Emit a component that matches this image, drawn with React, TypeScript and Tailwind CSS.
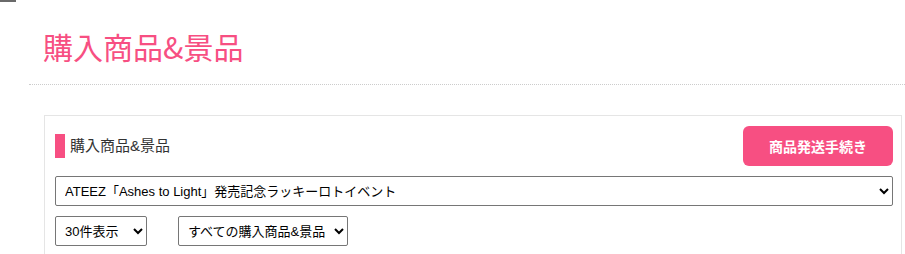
import React from "react";

const PINK = "bg-[#f74f82]";

export default function App() {
  return (
    <div className="w-[905px] h-[254px] overflow-hidden bg-white font-['Liberation_Sans','Noto_Sans_CJK_JP',sans-serif] text-black">
      {/* clipped text remnant at the very top */}
      <div className="h-[2px] w-[16px] bg-[#6a6a6a]" />

      {/* Page title */}
      <div className="ml-[29px]">
        <h1 className="mt-[22px] pl-[14px] pb-[16px] text-[30px] leading-[44px] font-normal text-[#f74f82] font-['Noto_Sans_CJK_JP',sans-serif] border-b border-dotted border-[#cccccc]">
          購入商品&amp;景品
        </h1>
      </div>

      {/* Card */}
      <div className="ml-[44px] mt-[30px] w-[858px] border border-[#e5e5e5] pt-[10px] pl-[10px] pr-[8px] pb-[10px]">
        <div className="flex h-[40px] items-center justify-between">
          <div className="flex items-center">
            <span className={`block h-[24px] w-[10px] ${PINK}`} />
            <span className="ml-[5px] text-[15px] leading-[24px] text-[#333333]">購入商品&amp;景品</span>
          </div>
          <button
            type="button"
            className={`h-[40px] w-[150px] rounded-[6px] ${PINK} text-[14px] font-bold text-white font-['Noto_Sans_CJK_JP',sans-serif]`}
          >
            商品発送手続き
          </button>
        </div>

        <select className="mt-[10px] block h-[30px] w-full rounded-[2px] border border-[#767676] bg-white pl-[5px] text-[13px] text-black">
          <option>ATEEZ「Ashes to Light」発売記念ラッキーロトイベント</option>
        </select>

        <div className="mt-[10px] flex gap-[31px]">
          <select className="block h-[30px] w-[92px] rounded-[2px] border border-[#767676] bg-white pl-[5px] text-[13px] text-black">
            <option>30件表示</option>
          </select>
          <select className="block h-[30px] w-[170px] rounded-[2px] border border-[#767676] bg-white pl-[5px] text-[13px] text-black">
            <option>すべての購入商品&amp;景品</option>
          </select>
        </div>
      </div>
    </div>
  );
}
